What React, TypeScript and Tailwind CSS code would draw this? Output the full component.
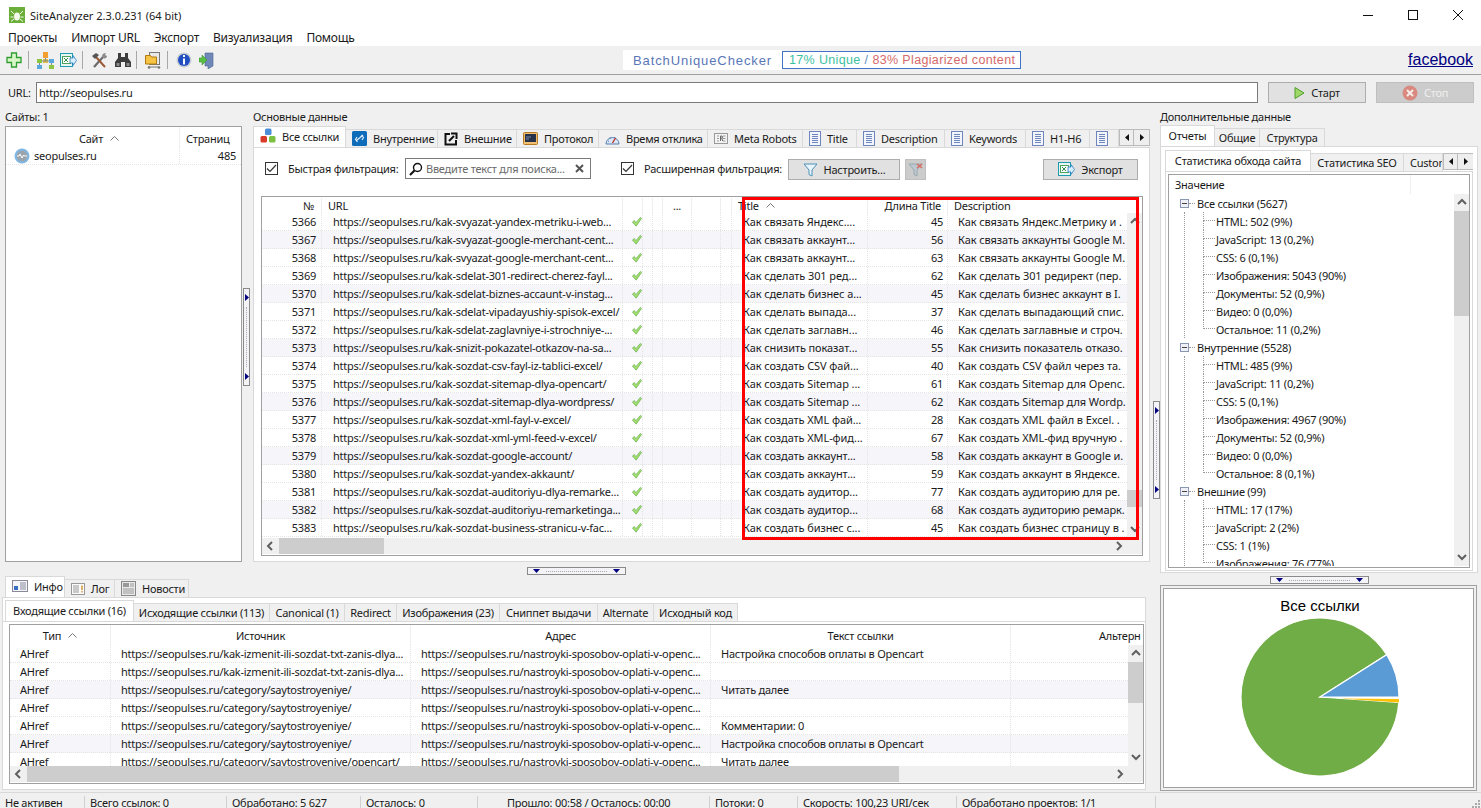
import type { ReactNode } from "react";

const BORDER = "border-[#d9d9d9]";

function Plus() {
  return (
    <svg width="16" height="16" viewBox="0 0 16 16">
      <path d="M5.500 1h5v4.500h4.500v5h-4.500v4.500h-5v-4.500h-4.500v-5h4.500z" fill="#d8f5c8" stroke="#2f9e2f" strokeWidth="1.300" />
    </svg>
  );
}

function SiteMap() {
  return (
    <svg width="17" height="17" viewBox="0 0 17 17">
      <rect x="6" y="0" width="5" height="6" fill="#f0a030" />
      <rect x="0" y="7" width="5" height="4" fill="#8cc63f" />
      <rect x="6" y="7" width="5" height="4" fill="#e8c040" />
      <rect x="12" y="7" width="5" height="4" fill="#5aa8e0" />
      <rect x="0" y="13" width="5" height="4" fill="#5aa8e0" />
      <rect x="12" y="13" width="5" height="4" fill="#8cc63f" />
      <path d="M5 9h7M8.500 6v3M2.500 11v2M14.500 11v2" stroke="#7a8a99" strokeWidth="1" />
    </svg>
  );
}

function ExportIcon() {
  return (
    <svg width="17" height="15" viewBox="0 0 17 15">
      <rect x="0.500" y="0.500" width="12" height="13" fill="#e8f6f4" stroke="#1f9bb0" />
      <rect x="2.500" y="3.500" width="8" height="7" fill="#fff" stroke="#4aa35a" />
      <path d="M4 5l4 4M8 5l-4 4" stroke="#2f8f4a" />
      <path d="M10 5h3v-2.500l3.500 5-3.500 5v-2.500h-3z" fill="#d8eefc" stroke="#2a7fc0" strokeWidth="0.800" />
    </svg>
  );
}

function Tools() {
  return (
    <svg width="17" height="17" viewBox="0 0 17 17">
      <path d="M3 15l9-10" stroke="#6b6b6b" strokeWidth="2.200" />
      <path d="M14 15l-9-10" stroke="#9a5a3a" strokeWidth="2" />
      <path d="M1 4l4-3 3 2-4 4z" fill="#555" />
      <path d="M11 4c0-2 2-3 4-3l-1 2 2 1c0 2-2 3-4 2z" fill="#8a8a8a" />
    </svg>
  );
}

function Binoculars() {
  return (
    <svg width="16" height="16" viewBox="0 0 16 16">
      <path d="M3 1h3v4h4v-4h3v5l3 4v5h-6v-5h-4v5h-6v-5l3-4z" fill="#3c3c3c" />
      <path d="M1.500 11h3v3h-3zM11.500 11h3v3h-3z" fill="#8a8a8a" />
    </svg>
  );
}

function FolderCart() {
  return (
    <svg width="17" height="17" viewBox="0 0 17 17">
      <rect x="4.500" y="0.500" width="10" height="12" fill="#e8e8e8" stroke="#777" />
      <path d="M0.500 3.500h5l1 1.500h5v7h-11z" fill="#f6c445" stroke="#b07a10" />
      <path d="M3 15h11" stroke="#777" />
      <circle cx="4" cy="15.500" r="1.300" fill="#777" />
      <circle cx="14" cy="15.500" r="1.300" fill="#777" />
    </svg>
  );
}

function InfoIcon() {
  return (
    <svg width="16" height="16" viewBox="0 0 16 16">
      <circle cx="8" cy="8" r="7.500" fill="#c8ccd4" />
      <circle cx="8" cy="8" r="6" fill="#1f4fc0" />
      <rect x="7" y="3" width="2" height="2" fill="#fff" />
      <rect x="7" y="6.500" width="2" height="6" fill="#fff" />
    </svg>
  );
}

function DoorArrow() {
  return (
    <svg width="15" height="17" viewBox="0 0 15 17">
      <path d="M6 1h8v13l-5 3v-3h-3z" fill="#7088b8" stroke="#4f6490" strokeWidth="0.600" />
      <path d="M0 6h3v-3l5 5-5 5v-3h-3z" fill="#58c040" stroke="#2f8f2a" strokeWidth="0.500" />
    </svg>
  );
}

function Cubes() {
  return (
    <svg width="16" height="16" viewBox="0 0 16 16">
      <rect x="5" y="0.500" width="6.500" height="6.500" rx="1.500" fill="#4a8fd8" />
      <rect x="0.500" y="8" width="6.500" height="6.500" rx="1.500" fill="#d83a2a" />
      <rect x="9" y="8" width="6.500" height="6.500" rx="1.500" fill="#7cc040" />
    </svg>
  );
}

function BlueLink() {
  return (
    <svg width="15" height="15" viewBox="0 0 15 15">
      <rect width="15" height="15" rx="1.500" fill="#0f6cb8" />
      <path d="M4 10l7-6M5 6l-1.500 2.500 2 2.500M10 9l1.500-2.500-2-2.500" stroke="#e8f4ff" strokeWidth="1.100" fill="none" />
    </svg>
  );
}

function ExternalBox() {
  return (
    <svg width="14" height="14" viewBox="0 0 14 14">
      <path d="M6 2h-4.500v10.500h10.500v-4.500" stroke="#111" strokeWidth="2" fill="none" />
      <path d="M5 9l5-5M7 1.500h5.500v5.500" stroke="#111" strokeWidth="2" fill="none" />
    </svg>
  );
}

function Monitor() {
  return (
    <svg width="15" height="13" viewBox="0 0 15 13">
      <rect x="0.500" y="0.500" width="14" height="12" rx="1" fill="#f0c070" stroke="#b87a20" />
      <rect x="2" y="2" width="11" height="8" fill="#26324a" />
      <path d="M3 7h3M3 5h5" stroke="#7a8aa8" />
    </svg>
  );
}

function Gauge() {
  return (
    <svg width="15" height="12" viewBox="0 0 15 12">
      <path d="M1 11a6.500 6.500 0 1 1 13 0z" fill="#d8e6f6" stroke="#5a7fb0" />
      <path d="M7.500 10l3-5" stroke="#c03020" strokeWidth="1.300" />
      <path d="M3 8l1 .5M5 4.500l.5 1M10 4l-.5 1" stroke="#5a7fb0" />
    </svg>
  );
}

function RobotsBox() {
  return (
    <svg width="14" height="11" viewBox="0 0 14 11">
      <rect x="0.500" y="0.500" width="13" height="10" fill="#f4f4f4" stroke="#999" />
      <path d="M3 3h2M3 5.500h2M3 8h2M9 3h2.500M9 5.500h2.500M9 8h2.500" stroke="#999" />
      <path d="M6.500 8v-5h1.500l.5 1-.5 1.200h-1.500M8 5.200l.6 2.800" stroke="#666" fill="none" />
    </svg>
  );
}

function DocLines() {
  return (
    <svg width="12" height="15" viewBox="0 0 12 15">
      <rect x="0.500" y="0.500" width="11" height="14" fill="#f2f5fc" stroke="#6f86bd" />
      <path d="M3 3.500h6M3 5.500h6M3 7.500h6M3 9.500h6M3 11.500h6" stroke="#6f86bd" />
    </svg>
  );
}

function Funnel({ muted }: { muted?: boolean }) {
  return (
    <svg width="15" height="14" viewBox="0 0 15 14">
      <path d="M1 1h13l-5 6v6l-3-1.500v-4.500z" fill={muted ? "#bcc8d0" : "#eaf5fb"} stroke={muted ? "#9aa8b0" : "#4a90b8"} />
      {muted && <path d="M9 1l5 4M14 1l-5 4" stroke="#d86a60" strokeWidth="1.500" />}
    </svg>
  );
}

function Magnifier() {
  return (
    <svg width="14" height="14" viewBox="0 0 14 14">
      <circle cx="8.500" cy="5.500" r="4" fill="#fff" stroke="#111" strokeWidth="1.400" />
      <path d="M5.500 8.500l-4.500 4.500" stroke="#111" strokeWidth="2.200" />
    </svg>
  );
}

function Check() {
  return (
    <svg width="12" height="12" viewBox="0 0 12 12">
      <path d="M0.500 6l2.300-1.800 1.900 2.600 5.300-6.300 1.500 1.200-6.500 9.300z" fill="#a6e070" stroke="#4f9e3a" strokeWidth="0.700" />
    </svg>
  );
}

function Globe() {
  return (
    <svg width="16" height="16" viewBox="0 0 16 16">
      <circle cx="8" cy="8" r="7.500" fill="#7fb8e6" />
      <circle cx="8" cy="8" r="5.500" fill="#9aa4ac" />
      <path d="M3 8h2l1-2 2 4 1.500-3 1 1h2.500" stroke="#fff" strokeWidth="1" fill="none" />
    </svg>
  );
}

function SortUp() {
  return (
    <svg width="9" height="5" viewBox="0 0 9 5">
      <path d="M0.500 4.500l4-4 4 4" stroke="#777" fill="none" />
    </svg>
  );
}

function Chevron({ dir }: { dir: "up" | "down" | "left" | "right" }) {
  const d = {
    up: "M1 6l4-4 4 4",
    down: "M1 2l4 4 4-4",
    left: "M6 1l-4 4 4 4",
    right: "M3 1l4 4-4 4",
  }[dir];
  return (
    <svg width="10" height="10" viewBox="0 0 10 10" className="shrink-0">
      <path d={d} stroke="#606060" strokeWidth="2" fill="none" />
    </svg>
  );
}

function Tri({ dir }: { dir: "down" | "right" }) {
  return dir === "down" ? (
    <svg width="7" height="4" viewBox="0 0 7 4">
      <path d="M0 0h7l-3.500 4z" fill="#000080" />
    </svg>
  ) : (
    <svg width="4" height="7" viewBox="0 0 4 7">
      <path d="M0 0l4 3.500-4 3.500z" fill="#000080" />
    </svg>
  );
}

function Checkbox() {
  return (
    <div className="w-[13px] h-[13px] border border-[#333] bg-white flex items-center justify-center shrink-0">
      <svg width="11" height="9" viewBox="0 0 11 9">
        <path d="M1 4.500l3 3 6-6.500" stroke="#333" strokeWidth="1.200" fill="none" />
      </svg>
    </div>
  );
}

function HSplitter() {
  return (
    <div className="w-[99px] h-[8px] border border-[#8a8a8a] bg-[#f4f4f8] flex items-center justify-between px-[5px]">
      <Tri dir="down" />
      <div className="flex-1 mx-[6px] border-t border-dotted border-[#aaa]" />
      <Tri dir="down" />
    </div>
  );
}

function VSplitter({ className }: { className: string }) {
  return (
    <div className={`w-[7px] h-[98px] border border-[#8a8a8a] bg-[#f4f4f8] flex flex-col items-center justify-between py-[5px] ${className}`}>
      <Tri dir="right" />
      <div className="flex-1 my-[6px] border-l border-dotted border-[#aaa]" />
      <Tri dir="right" />
    </div>
  );
}

function Tab({ label, icon, w, active, center }: { label?: string; icon?: ReactNode; w: string; active?: boolean; center?: boolean }) {
  return (
    <div
      className={`${w} ${active ? "h-[21px] bg-white pb-[2px]" : "h-[18px] bg-[#f0f0f0] border-l-0"} shrink-0 border border-b-0 ${BORDER} flex items-center gap-[6px] whitespace-nowrap overflow-hidden ${center ? "justify-center" : "pl-[6px]"}`}
    >
      {icon}
      {label}
    </div>
  );
}

function ArrowPair() {
  return (
    <div className="flex h-[17px]">
      <div className="w-[15px] border border-[#bbb] bg-[#eee] flex items-center justify-center">
        <svg width="4" height="7" viewBox="0 0 4 7"><path d="M4 0l-4 3.500 4 3.500z" fill="#111" /></svg>
      </div>
      <div className="w-[16px] border border-l-0 border-[#bbb] bg-[#eee] flex items-center justify-center">
        <svg width="4" height="7" viewBox="0 0 4 7"><path d="M0 0l4 3.500-4 3.500z" fill="#111" /></svg>
      </div>
    </div>
  );
}

function VScroll({ h, thumb }: { h: string; thumb: string }) {
  return (
    <div className={`w-[15px] ${h} bg-[#f0f0f0] flex flex-col shrink-0`}>
      <div className="h-[17px] flex items-center justify-center shrink-0"><Chevron dir="up" /></div>
      <div className="flex-1">
        <div className={`bg-[#cdcdcd] ${thumb}`} />
      </div>
      <div className="h-[17px] flex items-center justify-center shrink-0"><Chevron dir="down" /></div>
    </div>
  );
}

function HScroll({ thumb }: { thumb: string }) {
  return (
    <div className="h-[16px] bg-[#f0f0f0] flex items-center pr-[15px]">
      <div className="w-[17px] flex justify-center shrink-0"><Chevron dir="left" /></div>
      <div className="flex-1 h-full">
        <div className={`h-full bg-[#cdcdcd] ${thumb}`} />
      </div>
      <div className="w-[17px] flex justify-center shrink-0"><Chevron dir="right" /></div>
    </div>
  );
}

function Btn({ w, children, disabled }: { w: string; children: ReactNode; disabled?: boolean }) {
  return (
    <div className={`${w} h-[21px] border flex items-center justify-center gap-[6px] shrink-0 ${disabled ? "bg-[#cccccc] border-[#bfbfbf] text-[#f0f0f0]" : "bg-[#e1e1e1] border-[#adadad]"}`}>
      {children}
    </div>
  );
}

const ROWS: [number, string, string, number, string][] = [
  [5366, "kak-svyazat-yandex-metriku-i-web...", "Как связать Яндекс....", 45, "Как связать Яндекс.Метрику и ."],
  [5367, "kak-svyazat-google-merchant-cent...", "Как связать аккаунт...", 56, "Как связать аккаунты Google M."],
  [5368, "kak-svyazat-google-merchant-cent...", "Как связать аккаунт...", 63, "Как связать аккаунты Google M."],
  [5369, "kak-sdelat-301-redirect-cherez-fayl...", "Как сделать 301 ред...", 62, "Как сделать 301 редирект (пер."],
  [5370, "kak-sdelat-biznes-accaunt-v-instag...", "Как сделать бизнес а...", 45, "Как сделать бизнес аккаунт в I."],
  [5371, "kak-sdelat-vipadayushiy-spisok-excel/", "Как сделать выпада...", 37, "Как сделать выпадающий спис."],
  [5372, "kak-sdelat-zaglavniye-i-strochniye-...", "Как сделать заглавн...", 46, "Как сделать заглавные и строч."],
  [5373, "kak-snizit-pokazatel-otkazov-na-sa...", "Как снизить показат...", 55, "Как снизить показатель отказо."],
  [5374, "kak-sozdat-csv-fayl-iz-tablici-excel/", "Как создать CSV фай...", 40, "Как создать CSV файл через та."],
  [5375, "kak-sozdat-sitemap-dlya-opencart/", "Как создать Sitemap ...", 61, "Как создать Sitemap для Openc."],
  [5376, "kak-sozdat-sitemap-dlya-wordpress/", "Как создать Sitemap ...", 62, "Как создать Sitemap для Wordp."],
  [5377, "kak-sozdat-xml-fayl-v-excel/", "Как создать XML фай...", 28, "Как создать XML файл в Excel. ."],
  [5378, "kak-sozdat-xml-yml-feed-v-excel/", "Как создать XML-фид...", 67, "Как создать XML-фид вручную ."],
  [5379, "kak-sozdat-google-account/", "Как создать аккаунт...", 58, "Как создать аккаунт в Google и."],
  [5380, "kak-sozdat-yandex-akkaunt/", "Как создать аккаунт...", 59, "Как создать аккаунт в Яндексе."],
  [5381, "kak-sozdat-auditoriyu-dlya-remarke...", "Как создать аудитор...", 77, "Как создать аудиторию для ре."],
  [5382, "kak-sozdat-auditoriyu-remarketinga...", "Как создать аудитор...", 68, "Как создать аудиторию ремарк."],
  [5383, "kak-sozdat-business-stranicu-v-fac...", "Как создать бизнес с...", 45, "Как создать бизнес страницу в ."],
];

const LINKS: [string, string][] = [
  ["kak-izmenit-ili-sozdat-txt-zanis-dlya...", "Настройка способов оплаты в Opencart"],
  ["kak-izmenit-ili-sozdat-txt-zanis-dlya...", ""],
  ["category/saytostroyeniye/", "Читать далее"],
  ["category/saytostroyeniye/", ""],
  ["category/saytostroyeniye/", "Комментарии: 0"],
  ["category/saytostroyeniye/", "Настройка способов оплаты в Opencart"],
  ["category/saytostroyeniye/opencart/", "Читать далее"],
];

const CELL = "h-full flex items-center border-r border-dotted border-[#e4e4e4] shrink-0 overflow-hidden whitespace-nowrap";

function MainTable() {
  const headCell = "h-full border-r border-[#efefef] flex items-center shrink-0";
  return (
    <div className="ml-[7px] mr-[6px] border border-[#a0a0a0] h-[360px] flex flex-col overflow-hidden">
      <div className="h-[16px] flex shrink-0 pt-[1px]">
        <div className={`${headCell} w-[60px] justify-end pr-[7px]`}>№</div>
        <div className={`${headCell} w-[301px] pl-[6px]`}>URL</div>
        <div className={`${headCell} w-[20px]`} />
        <div className={`${headCell} w-[10px]`} />
        <div className={`${headCell} w-[10px]`} />
        <div className={`${headCell} w-[29px] justify-center`}>...</div>
        <div className={`${headCell} w-[29px]`} />
        <div className={`${headCell} w-[11px]`} />
        <div className={`${headCell} w-[136px] pl-[6px] gap-[7px]`}>Title <SortUp /></div>
        <div className={`${headCell} w-[80px] justify-end pr-[6px]`}>Длина Title</div>
        <div className="pl-[6px] flex items-center">Description</div>
      </div>
      <div className="flex h-[325px]">
        <div className="flex-1 overflow-hidden">
          {ROWS.map(([n, url, title, len, desc], i) => (
            <div key={n} className={`h-[18px] flex border-b border-dotted border-[#e4e4e4] ${i % 3 === 1 ? "bg-[#f5f5fa]" : "bg-white"}`}>
              <div className={`${CELL} w-[60px] justify-end pr-[5px]`}>{n}</div>
              <div className={`${CELL} w-[301px] pl-[11px]`}>https://seopulses.ru/{url}</div>
              <div className={`${CELL} w-[20px] pl-[9px]`}><Check /></div>
              <div className={`${CELL} w-[10px]`} />
              <div className={`${CELL} w-[10px]`} />
              <div className={`${CELL} w-[29px]`} />
              <div className={`${CELL} w-[29px]`} />
              <div className={`${CELL} w-[11px]`} />
              <div className={`${CELL} w-[136px] pl-[11px] tracking-[-0.1px]`}>{title}</div>
              <div className={`${CELL} w-[80px] justify-end pr-[4px]`}>{len}</div>
              <div className={`${CELL} w-[179px] pl-[10px] border-r-0 tracking-[-0.1px]`}>{desc}</div>
            </div>
          ))}
        </div>
        <VScroll h="h-[325px]" thumb="mt-[260px] h-[17px]" />
      </div>
      <HScroll thumb="w-[105px]" />
    </div>
  );
}

function LinksTable() {
  const head = "h-full border-r border-[#efefef] flex items-center justify-center shrink-0";
  return (
    <div className="ml-[6px] mr-[1px] border border-[#a0a0a0] h-[160px] flex flex-col overflow-hidden">
      <div className="h-[20px] flex shrink-0">
        <div className={`${head} w-[101px] gap-[7px]`}>Тип <SortUp /></div>
        <div className={`${head} w-[300px]`}>Источник</div>
        <div className={`${head} w-[300px]`}>Адрес</div>
        <div className={`${head} w-[300px]`}>Текст ссылки</div>
        <div className="flex-1 overflow-hidden whitespace-nowrap pl-[88px] flex items-center">Альтерн</div>
      </div>
      <div className="flex h-[121px] shrink-0">
        <div className="flex-1 overflow-hidden">
          {LINKS.map(([src, text], i) => (
            <div key={i} className={`h-[18px] flex border-b border-dotted border-[#e4e4e4] ${i % 3 === 2 ? "bg-[#f5f5fa]" : "bg-white"}`}>
              <div className={`${CELL} w-[101px] pl-[10px]`}>AHref</div>
              <div className={`${CELL} w-[300px] pl-[10px]`}>https://seopulses.ru/{src}</div>
              <div className={`${CELL} w-[300px] pl-[10px]`}>https://seopulses.ru/nastroyki-sposobov-oplati-v-openc...</div>
              <div className={`${CELL} w-[300px] pl-[10px]`}>{text}</div>
              <div className="flex-1" />
            </div>
          ))}
        </div>
        <VScroll h="h-[121px]" thumb="mt-0 h-[41px]" />
      </div>
      <HScroll thumb="w-[872px]" />
    </div>
  );
}

function TreeGroup({ title, items }: { title: string; items: string[] }) {
  return (
    <div>
      <div className="h-[18px] flex items-center pl-[11px]">
        <div className="w-[9px] h-[9px] border border-[#8a96b0] bg-[#eef0f6] flex items-center justify-center shrink-0">
          <div className="w-[5px] h-px bg-[#444]" />
        </div>
        <div className="w-[6px] border-t border-dotted border-[#999] mr-[2px]" />
        {title}
      </div>
      <div className="ml-[15px] border-l border-dotted border-[#999] pl-[18px]">
        {items.map((t, i) => (
          <div key={t} className="h-[18px] flex items-stretch whitespace-nowrap">
            <div className="w-[12px] mr-[1px] flex flex-col shrink-0">
              <div className="h-[9px] border-l border-b border-dotted border-[#999]" />
              <div className={`h-[9px] ${i < items.length - 1 ? "border-l border-dotted border-[#999]" : ""}`} />
            </div>
            <div className="flex items-center">{t}</div>
          </div>
        ))}
      </div>
    </div>
  );
}

function Pie() {
  return (
    <svg width="170" height="170" viewBox="-85 -85 170 170">
      <path d="M0 0L78.800 5.500A79 79 0 1 1 66.700 -42.300Z" fill="#70ad47" stroke="#fff" strokeWidth="1.200" />
      <path d="M0 0L66.700 -42.300A79 79 0 0 1 79 0Z" fill="#5b9bd5" stroke="#fff" strokeWidth="1.200" />
      <path d="M20 1.600L79 2A79 79 0 0 1 78.800 5.500Z" fill="#ffc000" />
    </svg>
  );
}

function StatusCell({ w, children }: { w: string; children: ReactNode }) {
  return <div className={`${w} shrink-0 h-full border-r border-[#d0d0d0] pl-[5px] whitespace-nowrap overflow-hidden flex items-center`}>{children}</div>;
}

export default function App() {
  return (
    <div className="relative w-[1481px] h-[808px] overflow-hidden bg-[#f0f0f0] flex flex-col text-[11px] tracking-[-0.25px] leading-none text-[#1a1a1a] font-['Noto_Sans','Liberation_Sans',sans-serif]">
      {/* title bar */}
      <div className="h-[30px] bg-white flex items-center pl-[9px] shrink-0">
        <svg width="16" height="16" viewBox="0 0 16 16" className="mr-[5px]">
          <rect width="16" height="16" fill="#6cae3a" />
          <ellipse cx="8" cy="9.500" rx="3" ry="4" fill="#f2f8ea" />
          <path d="M5 7l-3-3M11 7l3-3M4.500 10h-3M11.500 10h3M5 12l-3 2.500M11 12l3 2.500" stroke="#f2f8ea" />
        </svg>
        <span className="text-[11px] tracking-normal">SiteAnalyzer 2.3.0.231 (64 bit)</span>
        <div className="ml-auto flex items-center pr-[18px] gap-[35px]">
          <svg width="10" height="10" viewBox="0 0 10 10"><path d="M0 5.500h10" stroke="#111" /></svg>
          <svg width="10" height="10" viewBox="0 0 10 10"><rect x="0.500" y="0.500" width="9" height="9" fill="none" stroke="#111" /></svg>
          <svg width="10" height="10" viewBox="0 0 10 10"><path d="M0 0l10 10M10 0l-10 10" stroke="#111" /></svg>
        </div>
      </div>
      {/* menu */}
      <div className="h-[16px] bg-white flex items-center pl-[8px] gap-[14px] text-[12px] shrink-0">
        <span>Проекты</span>
        <span>Импорт URL</span>
        <span>Экспорт</span>
        <span>Визуализация</span>
        <span>Помощь</span>
      </div>
      {/* toolbar */}
      <div className="h-[29px] border-b border-[#a0a0a0] flex items-center pl-[6px] shrink-0">
        <Plus />
        <div className="w-px h-[18px] bg-[#a8a8a8] ml-[6px] mr-[8px]" />
        <SiteMap />
        <div className="ml-[6px]"><ExportIcon /></div>
        <div className="w-px h-[18px] bg-[#a8a8a8] ml-[5px] mr-[8px]" />
        <Tools />
        <div className="ml-[7px]"><Binoculars /></div>
        <div className="w-px h-[18px] bg-[#a8a8a8] ml-[5px] mr-[8px]" />
        <FolderCart />
        <div className="w-px h-[18px] bg-[#a8a8a8] ml-[5px] mr-[8px]" />
        <InfoIcon />
        <div className="ml-[7px]"><DoorArrow /></div>
        <div className="ml-[409px] w-[159px] h-[20px] bg-white flex items-center pl-[10px] text-[13px] tracking-[0.9px] text-[#5a76b8] font-['Liberation_Sans',sans-serif]">BatchUniqueChecker</div>
        <div className="w-[239px] h-[18px] bg-white border border-[#4472c4] flex items-center pl-[6px] text-[12.5px] tracking-[0.35px] whitespace-nowrap font-['Liberation_Sans',sans-serif]">
          <span className="text-[#3cbf9f]">17% Unique</span>
          <span className="text-[#5a8fc0] mx-[4px]">/</span>
          <span className="text-[#d46a6a]">83% Plagiarized content</span>
        </div>
        <span className="ml-auto mr-[8px] text-[16px] tracking-normal underline text-[#000080] font-['Liberation_Sans',sans-serif]">facebook</span>
      </div>
      {/* url row */}
      <div className="h-[35px] flex items-start pt-[7px] pl-[8px] shrink-0">
        <span className="w-[28px] h-[21px] flex items-center">URL:</span>
        <div className="w-[1222px] h-[21px] border border-[#7a7a7a] bg-white flex items-center pl-[2px]">http://seopulses.ru</div>
        <div className="ml-[10px]">
          <Btn w="w-[98px]">
            <svg width="11" height="12" viewBox="0 0 11 12"><path d="M1 0.500l9 5.500-9 5.500z" fill="#9ed86a" stroke="#4f9e2a" /></svg>
            Старт
          </Btn>
        </div>
        <div className="ml-[10px]">
          <Btn w="w-[98px]" disabled>
            <svg width="16" height="16" viewBox="0 0 16 16"><circle cx="8" cy="8" r="7.500" fill="#d88a80" /><path d="M5 5l6 6M11 5l-6 6" stroke="#f6ecea" strokeWidth="2" /></svg>
            Стоп
          </Btn>
        </div>
      </div>
      {/* body */}
      <div className="h-[682px] flex shrink-0">
        <div className="w-[1150px] shrink-0 flex flex-col">
          <div className="h-[452px] flex shrink-0">
            {/* sites */}
            <div className="w-[242px] shrink-0 pl-[5px] flex flex-col">
              <div className="h-[16px] pb-[3px] flex items-center">Сайты: 1</div>
              <div className="h-[436px] border border-[#a0a0a0] bg-white">
                <div className="h-[20px] flex">
                  <div className="w-[174px] border-r border-[#efefef] flex items-center justify-center gap-[7px] pt-[2px] pl-[13px]">Сайт <SortUp /></div>
                  <div className="flex-1 flex items-center pl-[6px] pt-[2px]">Страниц</div>
                </div>
                <div className="h-[18px] flex border-b border-dotted border-[#e4e4e4]">
                  <div className="w-[174px] border-r border-dotted border-[#e4e4e4] flex items-center pl-[8px] gap-[4px]"><Globe /> seopulses.ru</div>
                  <div className="flex-1 flex items-center justify-end pr-[5px]">485</div>
                </div>
              </div>
            </div>
            <VSplitter className="mt-[178px] ml-[1px] mr-[3px] shrink-0" />
            {/* main data */}
            <div className="w-[897px] shrink-0 flex flex-col">
              <div className="h-[16px] pb-[3px] flex items-center">Основные данные</div>
              <div className="h-[21px] flex items-end shrink-0">
                <Tab w="w-[93px]" active icon={<Cubes />} label="Все ссылки" />
                <Tab w="w-[92px]" icon={<BlueLink />} label="Внутренние" />
                <Tab w="w-[79px]" icon={<ExternalBox />} label="Внешние" />
                <Tab w="w-[82px]" icon={<Monitor />} label="Протокол" />
                <Tab w="w-[109px]" icon={<Gauge />} label="Время отклика" />
                <Tab w="w-[95px]" icon={<RobotsBox />} label="Meta Robots" />
                <Tab w="w-[54px]" icon={<DocLines />} label="Title" />
                <Tab w="w-[88px]" icon={<DocLines />} label="Description" />
                <Tab w="w-[81px]" icon={<DocLines />} label="Keywords" />
                <Tab w="w-[64px]" icon={<DocLines />} label="H1-H6" />
                <Tab w="w-[29px]" icon={<DocLines />} />
                <div className="ml-auto mb-[1px]"><ArrowPair /></div>
              </div>
              <div className="h-[415px] bg-white border border-[#d9d9d9] flex flex-col">
                <div className="h-[48px] flex items-start pt-[10px] shrink-0">
                  <div className="ml-[11px] mt-[4px]"><Checkbox /></div>
                  <span className="ml-[10px] w-[117px] h-[21px] flex items-center whitespace-nowrap">Быстрая фильтрация:</span>
                  <div className="w-[186px] h-[21px] border border-[#7a7a7a] bg-white flex items-center pl-[3px] gap-[3px] text-[#6a6a6a]">
                    <Magnifier />
                    <span className="whitespace-nowrap">Введите текст для поиска...</span>
                    <svg width="9" height="9" viewBox="0 0 9 9" className="ml-auto mr-[6px]"><path d="M1 1l7 7M8 1l-7 7" stroke="#555" strokeWidth="2" /></svg>
                  </div>
                  <div className="ml-[30px] mt-[4px]"><Checkbox /></div>
                  <span className="ml-[10px] w-[144px] h-[21px] flex items-center whitespace-nowrap">Расширенная фильтрация:</span>
                  <div className="mt-[1px]"><Btn w="w-[112px]"><Funnel /> Настроить...</Btn></div>
                  <div className="ml-[5px] mt-[1px]">
                    <div className="w-[21px] h-[21px] bg-[#cccccc] border border-[#bfbfbf] flex items-center justify-center"><Funnel muted /></div>
                  </div>
                  <div className="ml-[117px] mt-[1px]"><Btn w="w-[95px]"><ExportIcon /> Экспорт</Btn></div>
                </div>
                <MainTable />
              </div>
            </div>
          </div>
          <div className="h-[13px] shrink-0 pl-[527px] pt-[5px]"><HSplitter /></div>
          {/* info panel */}
          <div className="h-[217px] shrink-0 flex flex-col">
            <div className="h-[22px] flex items-end pl-[5px] shrink-0">
              <Tab w="w-[60px]" active label="Инфо" icon={
                <svg width="16" height="12" viewBox="0 0 16 12"><rect x="0.500" y="0.500" width="15" height="11" fill="#f4f6fa" stroke="#889" /><rect x="2" y="6" width="4" height="4" fill="#3a6fc0" /><path d="M8 3h6M8 5h6M8 7h6M8 9h6" stroke="#889" /></svg>
              } />
              <Tab w="w-[50px]" label="Лог" icon={
                <svg width="14" height="12" viewBox="0 0 14 12"><rect x="0.500" y="0.500" width="13" height="11" fill="#fafafa" stroke="#999" /><path d="M2 3h6M2 5h6M2 7h6M2 9h6" stroke="#999" /><path d="M11 2.500v4.500M11 8v1.500" stroke="#d08a20" strokeWidth="1.300" /></svg>
              } />
              <Tab w="w-[74px]" label="Новости" icon={
                <svg width="15" height="15" viewBox="0 0 15 15"><rect x="0.500" y="0.500" width="14" height="14" fill="#e8e8e8" stroke="#888" /><rect x="2" y="2" width="6" height="4" fill="#999" /><path d="M9 3h4M9 5h4M2 8h11M2 10h11M2 12h11" stroke="#999" /></svg>
              } />
            </div>
            <div className="ml-[2px] w-[1144px] h-[193px] bg-white border border-[#d9d9d9] flex flex-col pt-[3px]">
              <div className="h-[20px] flex items-end pl-[2px] shrink-0">
                <Tab w="w-[129px]" active label="Входящие ссылки (16)" center />
                <Tab w="w-[136px]" label="Исходящие ссылки (113)" center />
                <Tab w="w-[75px]" label="Canonical (1)" center />
                <Tab w="w-[52px]" label="Redirect" center />
                <Tab w="w-[103px]" label="Изображения (23)" center />
                <Tab w="w-[98px]" label="Сниппет выдачи" center />
                <Tab w="w-[56px]" label="Alternate" center />
                <Tab w="w-[84px]" label="Исходный код" center />
              </div>
              <div className="h-[3px] border-t border-[#d9d9d9] shrink-0" />
              <LinksTable />
            </div>
          </div>
        </div>
        <div className="w-[10px] shrink-0">
          <VSplitter className="mt-[291px] ml-[3px]" />
        </div>
        {/* extra data */}
        <div className="w-[321px] shrink-0 flex flex-col">
          <div className="h-[16px] pb-[3px] flex items-center">Дополнительные данные</div>
          <div className="h-[20px] flex items-end shrink-0">
            <Tab w="w-[55px]" active label="Отчеты" center />
            <Tab w="w-[45px]" label="Общие" center />
            <Tab w="w-[65px]" label="Структура" center />
          </div>
          <div className="w-[318px] h-[427px] bg-white border border-[#d9d9d9] px-[4px] pt-[3px] shrink-0">
            <div className="h-[21px] flex items-end overflow-hidden">
              <Tab w="w-[146px]" active label="Статистика обхода сайта" center />
              <Tab w="w-[93px]" label="Статистика SEO" center />
              <Tab w="w-[39px]" label="Custom" />
              <div className="ml-auto mb-[1px]"><ArrowPair /></div>
            </div>
            <div className="h-[400px] border border-[#d9d9d9] p-[2px]">
              <div className="h-[394px] border border-[#a0a0a0] overflow-hidden">
                <div className="h-[19px] flex">
                  <div className="w-[242px] border-r border-[#efefef] flex items-center pl-[6px]">Значение</div>
                </div>
                <div className="flex">
                  <div className="flex-1 overflow-hidden h-[372px]">
                    <TreeGroup title="Все ссылки (5627)" items={["HTML: 502 (9%)", "JavaScript: 13 (0,2%)", "CSS: 6 (0,1%)", "Изображения: 5043 (90%)", "Документы: 52 (0,9%)", "Видео: 0 (0,0%)", "Остальное: 11 (0,2%)"]} />
                    <TreeGroup title="Внутренние (5528)" items={["HTML: 485 (9%)", "JavaScript: 11 (0,2%)", "CSS: 5 (0,1%)", "Изображения: 4967 (90%)", "Документы: 52 (0,9%)", "Видео: 0 (0,0%)", "Остальное: 8 (0,1%)"]} />
                    <TreeGroup title="Внешние (99)" items={["HTML: 17 (17%)", "JavaScript: 2 (2%)", "CSS: 1 (1%)", "Изображения: 76 (77%)"]} />
                  </div>
                  <VScroll h="h-[372px]" thumb="mt-0 h-[105px]" />
                </div>
              </div>
            </div>
          </div>
          <div className="h-[12px] shrink-0 pl-[110px] pt-[3px]"><HSplitter /></div>
          <div className="w-[317px] h-[206px] shrink-0 border border-[#a0a0a0] p-[2px] bg-[#f0f0f0]">
            <div className="h-full border border-[#a0a0a0] bg-white flex flex-col items-center overflow-hidden pl-[3px]">
              <div className="mt-[8px] text-[15px] tracking-normal h-[16px] shrink-0 flex items-center font-['Liberation_Sans',sans-serif] text-black">Все ссылки</div>
              <div className="-mt-[1px]"><Pie /></div>
            </div>
          </div>
        </div>
      </div>
      {/* status bar */}
      <div className="h-[16px] shrink-0 border-t border-[#d9d9d9] flex pt-[3px]">
        <StatusCell w="w-[85px]">Не активен</StatusCell>
        <StatusCell w="w-[142px]">Всего ссылок: 0</StatusCell>
        <StatusCell w="w-[134px]">Обработано: 5 627</StatusCell>
        <StatusCell w="w-[117px]">Осталось: 0</StatusCell>
        <StatusCell w="w-[232px]"><span className="ml-[24px]">Прошло: 00:58 / Осталось: 00:00</span></StatusCell>
        <StatusCell w="w-[88px]">Потоки: 0</StatusCell>
        <StatusCell w="w-[159px]">Скорость: 100,23 URI/сек</StatusCell>
        <StatusCell w="w-[199px]">Обработано проектов: 1/1</StatusCell>
        <svg width="9" height="8" viewBox="0 0 9 8" className="ml-auto mt-[4px] shrink-0">
          <path d="M6 0h2v2h-2zM3 3h2v2h-2zM6 3h2v2h-2zM0 6h2v2h-2zM3 6h2v2h-2zM6 6h2v2h-2z" fill="#aaa" />
        </svg>
      </div>
      {/* red highlight over the table */}
      <div className="absolute left-[742px] top-[197px] w-[397px] h-[343px] border-[3px] border-[#ff0000] pointer-events-none" />
    </div>
  );
}
